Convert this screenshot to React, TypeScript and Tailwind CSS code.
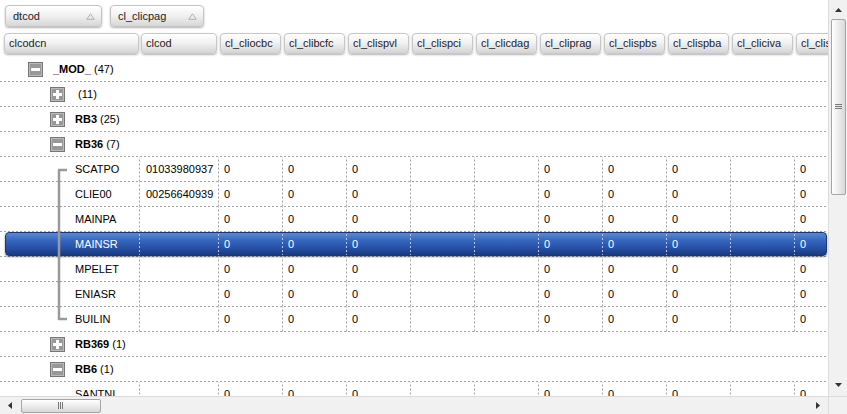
import React from "react";

type Pos = "first" | "mid" | "last" | "none";

type Row =
  | { kind: "group"; level: 1 | 2; open: boolean; name: string; count: number }
  | { kind: "leaf"; name: string; code: string; pos: Pos; selected?: boolean };

const headers = [
  { name: "clcod", w: "w-[79px]" },
  { name: "cl_cliocbc", w: "w-[64px]" },
  { name: "cl_clibcfc", w: "w-[64px]" },
  { name: "cl_clispvl", w: "w-[64px]" },
  { name: "cl_clispci", w: "w-[64px]" },
  { name: "cl_clicdag", w: "w-[64px]" },
  { name: "cl_cliprag", w: "w-[64px]" },
  { name: "cl_clispbs", w: "w-[64px]" },
  { name: "cl_clispba", w: "w-[64px]" },
  { name: "cl_cliciva", w: "w-[64px]" },
  { name: "cl_clisdes", w: "w-[64px]" },
];

// values for the cl_ columns in every leaf row
const values = ["0", "0", "0", "", "", "0", "0", "0", "", "0"];

const rows: Row[] = [
  { kind: "group", level: 1, open: true, name: "_MOD_", count: 47 },
  { kind: "group", level: 2, open: false, name: "", count: 11 },
  { kind: "group", level: 2, open: false, name: "RB3", count: 25 },
  { kind: "group", level: 2, open: true, name: "RB36", count: 7 },
  { kind: "leaf", name: "SCATPO", code: "01033980937", pos: "first" },
  { kind: "leaf", name: "CLIE00", code: "00256640939", pos: "mid" },
  { kind: "leaf", name: "MAINPA", code: "", pos: "mid" },
  { kind: "leaf", name: "MAINSR", code: "", pos: "mid", selected: true },
  { kind: "leaf", name: "MPELET", code: "", pos: "mid" },
  { kind: "leaf", name: "ENIASR", code: "", pos: "mid" },
  { kind: "leaf", name: "BUILIN", code: "", pos: "last" },
  { kind: "group", level: 2, open: false, name: "RB369", count: 1 },
  { kind: "group", level: 2, open: true, name: "RB6", count: 1 },
  { kind: "leaf", name: "SANTNI", code: "", pos: "none" },
];

const ROW_LINE =
  "bg-[linear-gradient(to_right,#a4a4a4_2px,transparent_2px)] bg-[length:4px_1px] bg-repeat-x bg-bottom";
const CELL_LINE =
  "bg-[linear-gradient(to_bottom,#a4a4a4_2px,transparent_2px)] bg-[length:1px_4px] bg-repeat-y bg-right";
const CELL_LINE_SEL =
  "bg-[linear-gradient(to_bottom,#b9c6de_2px,transparent_2px)] bg-[length:1px_4px] bg-repeat-y bg-right";

function ExpandIcon({ open }: { open: boolean }) {
  return (
    <svg width="15" height="15" viewBox="0 0 15 15" className="shrink-0">
      <rect x="0.5" y="0.5" width="14" height="14" fill="#989898" stroke="#767676" />
      <rect x="1.5" y="1.5" width="12" height="12" fill="none" stroke="#bababa" />
      <rect x="3" y="6" width="9" height="3" fill="#fff" />
      {!open && <rect x="6" y="3" width="3" height="9" fill="#fff" />}
    </svg>
  );
}

function TreeLine({ pos }: { pos: Pos }) {
  if (pos === "none") return <div className="w-[10px] shrink-0" />;
  return (
    <svg width="10" height="25" viewBox="0 0 10 25" className="shrink-0 self-start overflow-visible">
      {pos === "first" && <path d="M2 13 V25 M1 13 H10" stroke="#9a9a9a" strokeWidth="2.5" />}
      {pos === "mid" && <path d="M2 -1 V26" stroke="#9a9a9a" strokeWidth="2.5" />}
      {pos === "last" && <path d="M2 0 V13 M1 12 H10" stroke="#9a9a9a" strokeWidth="2.5" />}
    </svg>
  );
}

function SortArrow() {
  return (
    <svg width="9" height="7" viewBox="0 0 9 7">
      <path d="M4.5 0.8 L8.2 6.3 H0.8 Z" fill="none" stroke="#b0b0b0" strokeWidth="1" />
    </svg>
  );
}

function GroupButton({ label, w }: { label: string; w: string }) {
  return (
    <div
      className={`${w} h-[22px] flex items-center justify-between pl-[7px] pr-[6px] rounded-[4px] border border-[#c4c4c4] bg-[linear-gradient(to_bottom,#ffffff,#f0f0f0_50%,#d6d6d6)] shadow-[0_1px_2px_rgba(0,0,0,0.3)] text-[#222]`}
    >
      <span>{label}</span>
      <SortArrow />
    </div>
  );
}

function HeaderButton({ label }: { label: string }) {
  return (
    <div className="h-[21px] w-full flex items-center pl-[4px] rounded-[4px] border border-[#c8c8c8] bg-[linear-gradient(to_bottom,#ffffff,#f2f2f2_45%,#d4d4d4)] shadow-[0_1px_2px_rgba(0,0,0,0.3)] text-[#222] whitespace-nowrap overflow-hidden">
      {label}
    </div>
  );
}

function GroupRow({ row }: { row: Extract<Row, { kind: "group" }> }) {
  return (
    <div className={`h-[25px] shrink-0 flex items-center gap-[10px] ${ROW_LINE} ${row.level === 1 ? "pl-[28px]" : "pl-[50px]"}`}>
      <ExpandIcon open={row.open} />
      <span className="whitespace-pre text-black">
        <b>{row.name}</b> ({row.count})
      </span>
    </div>
  );
}

function LeafRow({ row }: { row: Extract<Row, { kind: "leaf" }> }) {
  const sel = !!row.selected;
  const line = sel ? CELL_LINE_SEL : CELL_LINE;
  const cells = (
    <>
      <div className={`${sel ? "w-[134px] pl-[51px]" : "w-[140px] pl-[57px]"} shrink-0 flex items-center ${line}`}>
        <TreeLine pos={row.pos} />
        <span className="ml-[8px] self-center">{row.name}</span>
      </div>
      <div className={`w-[79px] shrink-0 flex items-center pl-[6px] ${line}`}>{row.code}</div>
      {values.map((v, i) => (
        <div key={i} className={`w-[64px] shrink-0 flex items-center pl-[5px] ${line}`}>
          {v}
        </div>
      ))}
    </>
  );

  if (sel) {
    return (
      <div className={`h-[25px] shrink-0 ${ROW_LINE}`}>
        <div className="ml-[5px] w-[822px] h-[24px] flex rounded-[4px] border border-[#1b3677] bg-[linear-gradient(to_bottom,#5a88d6,#3565bd_35%,#2550a4_70%,#1a3a80)] shadow-[0_1px_2px_rgba(0,0,0,0.45)] text-white">
          {cells}
        </div>
      </div>
    );
  }
  return <div className={`h-[25px] shrink-0 flex text-black ${ROW_LINE}`}>{cells}</div>;
}

function VScrollbar() {
  return (
    <div className="w-[19px] h-full shrink-0 flex flex-col items-center bg-[#f1f1f1] border-l border-[#dcdcdc]">
      <div className="h-[19px] w-full flex items-center justify-center">
        <svg width="7" height="4" viewBox="0 0 7 4">
          <path d="M3.5 0 L7 4 H0 Z" fill="#333" />
        </svg>
      </div>
      <div className="w-[15px] h-[176px] flex items-center justify-center rounded-[2px] border border-[#a6a6a6] bg-[linear-gradient(to_right,#ffffff,#ececec_50%,#d8d8d8)]">
        <svg width="7" height="6" viewBox="0 0 7 6">
          <path d="M0 0.5 H7 M0 2.5 H7 M0 4.5 H7" stroke="#777" strokeWidth="1" />
        </svg>
      </div>
      <div className="flex-1" />
      <div className="h-[22px] w-full flex items-center justify-center">
        <svg width="7" height="4" viewBox="0 0 7 4">
          <path d="M0 0 H7 L3.5 4 Z" fill="#333" />
        </svg>
      </div>
    </div>
  );
}

function HScrollbar() {
  return (
    <div className="h-[18px] flex shrink-0">
      <div className="w-[828px] h-full flex items-center bg-[#f1f1f1] border-t border-[#dcdcdc]">
        <div className="w-[20px] flex justify-center">
          <svg width="4" height="7" viewBox="0 0 4 7">
            <path d="M4 0 V7 L0 3.5 Z" fill="#333" />
          </svg>
        </div>
        <div className="ml-[1px] w-[80px] h-[14px] flex items-center justify-center rounded-[2px] border border-[#a6a6a6] bg-[linear-gradient(to_bottom,#ffffff,#ececec_50%,#d8d8d8)]">
          <svg width="6" height="7" viewBox="0 0 6 7">
            <path d="M0.5 0 V7 M2.5 0 V7 M4.5 0 V7" stroke="#777" strokeWidth="1" />
          </svg>
        </div>
        <div className="flex-1" />
        <div className="w-[20px] flex justify-center">
          <svg width="4" height="7" viewBox="0 0 4 7">
            <path d="M0 0 V7 L4 3.5 Z" fill="#333" />
          </svg>
        </div>
      </div>
      <div className="w-[19px] h-full bg-[#f1f1f1] border-t border-l border-[#dcdcdc]" />
    </div>
  );
}

export default function App() {
  return (
    <div className="w-[847px] h-[414px] flex flex-col overflow-hidden bg-white text-[11px] font-['Liberation_Sans',Arial,sans-serif]">
      <div className="h-[396px] flex shrink-0">
        <div className="w-[828px] h-full flex flex-col overflow-hidden">
          {/* group by area */}
          <div className="h-[33px] shrink-0 flex items-start gap-[8px] pl-[5px] pt-[5px]">
            <GroupButton label="dtcod" w="w-[97px]" />
            <GroupButton label="cl_clicpag" w="w-[94px]" />
          </div>

          {/* column headers */}
          <div className="h-[24px] shrink-0 flex items-start">
            <div className="w-[140px] shrink-0 pl-[4px] pr-[1px]">
              <HeaderButton label="clcodcn" />
            </div>
            {headers.map((h) => (
              <div key={h.name} className={`${h.w} shrink-0 pl-[1px] pr-[2px]`}>
                <HeaderButton label={h.name} />
              </div>
            ))}
          </div>

          {/* rows */}
          <div className="flex-1 flex flex-col overflow-hidden">
            {rows.map((r, i) =>
              r.kind === "group" ? <GroupRow key={i} row={r} /> : <LeafRow key={i} row={r} />
            )}
          </div>
        </div>
        <VScrollbar />
      </div>
      <HScrollbar />
    </div>
  );
}
